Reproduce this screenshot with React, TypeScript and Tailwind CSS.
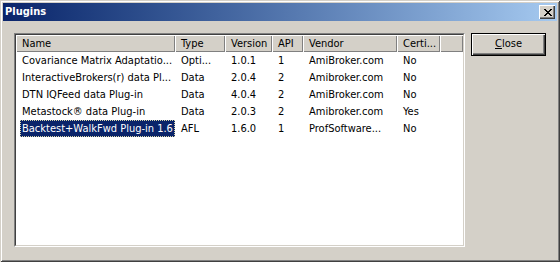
import React from "react";

const cols = [
  { label: "Name", w: "w-[159px]" },
  { label: "Type", w: "w-[50px]" },
  { label: "Version", w: "w-[47px]" },
  { label: "API", w: "w-[31px]" },
  { label: "Vendor", w: "w-[94px]" },
  { label: "Certi...", w: "w-[43px]" },
];

const rows = [
  ["Covariance Matrix Adaptatio...", "Opti...", "1.0.1", "1", "AmiBroker.com", "No"],
  ["InteractiveBrokers(r) data Pl...", "Data", "2.0.4", "2", "Amibroker.com", "No"],
  ["DTN IQFeed data Plug-in", "Data", "4.0.4", "2", "AmiBroker.com", "No"],
  ["Metastock\u00ae data Plug-in", "Data", "2.0.3", "2", "Amibroker.com", "Yes"],
  ["Backtest+WalkFwd Plug-in 1.6", "AFL", "1.6.0", "1", "ProfSoftware...", "No"],
];

const raised =
  "shadow-[inset_1px_1px_0_#ffffff,inset_-1px_-1px_0_#404040,inset_-2px_-2px_0_#808080]";
const header =
  "shadow-[inset_1px_1px_0_#ffffff,inset_-1px_-1px_0_#808080]";

function CloseGlyph() {
  const pattern = [
    "XX....XX",
    ".XX..XX.",
    "..XXXX..",
    "...XX...",
    "..XXXX..",
    ".XX..XX.",
    "XX....XX",
  ];
  const rects: React.ReactElement[] = [];
  pattern.forEach((line, y) =>
    line.split("").forEach((c, x) => {
      if (c === "X") rects.push(<rect key={`${x}-${y}`} x={x} y={y} width={1} height={1} fill="#000" />);
    })
  );
  return (
    <svg width="8" height="7" viewBox="0 0 8 7" shapeRendering="crispEdges">
      {rects}
    </svg>
  );
}

export default function App() {
  return (
    <div className="w-[560px] h-[262px] bg-[#d4d0c8] p-[3px] flex flex-col font-['DejaVu_Sans_Condensed','Liberation_Sans',Arial,sans-serif] text-[11px] text-black shadow-[inset_1px_1px_0_#d4d0c8,inset_-1px_-1px_0_#404040,inset_2px_2px_0_#ffffff,inset_-2px_-2px_0_#808080]">
      {/* Caption */}
      <div className="h-[18px] flex items-center justify-between bg-gradient-to-r from-[#0a246a] to-[#a6caf0] pl-[2px] pr-[2px]">
        <span className="text-white font-bold text-[11px] leading-[18px]">Plugins</span>
        <div className={`w-[16px] h-[14px] bg-[#d4d0c8] flex items-center justify-center pl-[1px] ${raised}`}>
          <CloseGlyph />
        </div>
      </div>

      {/* Body */}
      <div className="flex flex-row gap-[6px] pt-[12px] pl-[11px]">
        {/* List view */}
        <div className="w-[451px] h-[214px] border border-t-[#808080] border-l-[#808080] border-b-[#ffffff] border-r-[#ffffff]">
          <div className="w-full h-full border border-t-[#404040] border-l-[#404040] border-b-[#d4d0c8] border-r-[#d4d0c8] bg-white overflow-hidden">
            <div className="flex h-[17px]">
              {cols.map((c) => (
                <div
                  key={c.label}
                  className={`${c.w} shrink-0 h-full bg-[#d4d0c8] px-[6px] leading-[17px] whitespace-nowrap overflow-hidden ${header}`}
                >
                  {c.label}
                </div>
              ))}
              <div className={`flex-1 h-full bg-[#d4d0c8] ${header}`} />
            </div>
            {rows.map((r, i) => (
              <div key={i} className="flex h-[17px] leading-[17px]">
                {r.map((cell, j) => (
                  <div key={j} className={`${cols[j].w} shrink-0 whitespace-nowrap overflow-hidden ${j === 0 && i === 4 ? "pl-[4px]" : "px-[6px]"}`}>
                    {j === 0 && i === 4 ? (
                      <span className="inline-block h-[17px] leading-[17px] bg-[#0a246a] text-white px-[2px] outline outline-1 outline-dotted outline-[#d8d4a8] -outline-offset-1">
                        {cell}
                      </span>
                    ) : (
                      cell
                    )}
                  </div>
                ))}
              </div>
            ))}
          </div>
        </div>

        {/* Close button */}
        <div className="w-[75px] h-[23px] border border-black shrink-0">
          <div className={`w-full h-full bg-[#d4d0c8] flex items-center justify-center ${raised}`}>
            <span>
              <span className="underline">C</span>lose
            </span>
          </div>
        </div>
      </div>
    </div>
  );
}
